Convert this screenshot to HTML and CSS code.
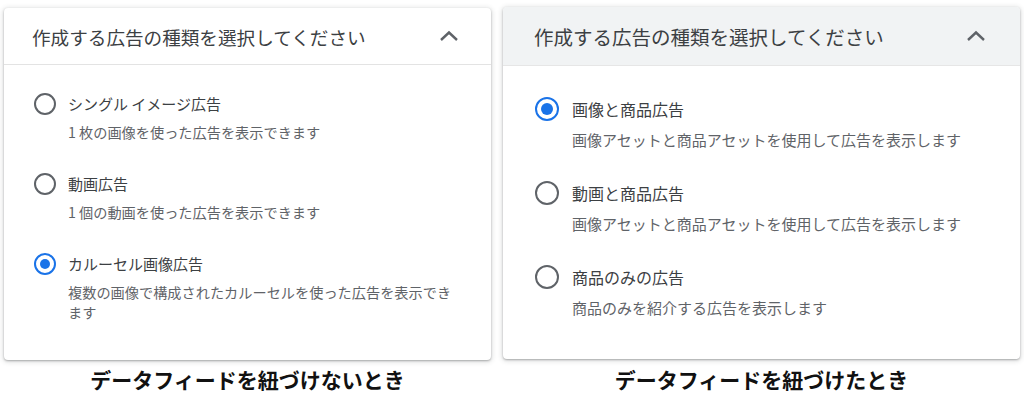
FILE: index.html
```html
<!DOCTYPE html>
<html lang="ja">
<head>
<meta charset="utf-8">
<link rel="stylesheet" href="styles.css">
</head>
<body>
<div class="page">
  <div class="col col-left">
    <div class="card">
      <div class="card-head">
        <span class="title">作成する広告の種類を選択してください</span>
        <svg class="chev" width="20" height="12" viewBox="0 0 20 12"><polyline points="2,10 10,2.5 18,10" fill="none" stroke="#5f6368" stroke-width="2.4"/></svg>
      </div>
      <div class="card-body">
        <div class="opt">
          <span class="radio"></span>
          <div class="texts">
            <div class="label">シングル イメージ広告</div>
            <div class="sub">1 枚の画像を使った広告を表示できます</div>
          </div>
        </div>
        <div class="opt">
          <span class="radio"></span>
          <div class="texts">
            <div class="label">動画広告</div>
            <div class="sub">1 個の動画を使った広告を表示できます</div>
          </div>
        </div>
        <div class="opt">
          <span class="radio on"></span>
          <div class="texts">
            <div class="label">カルーセル画像広告</div>
            <div class="sub">複数の画像で構成されたカルーセルを使った広告を表示できます</div>
          </div>
        </div>
      </div>
    </div>
    <div class="caption">データフィードを紐づけないとき</div>
  </div>
  <div class="col col-right">
    <div class="card">
      <div class="card-head">
        <span class="title">作成する広告の種類を選択してください</span>
        <svg class="chev" width="20" height="12" viewBox="0 0 20 12"><polyline points="2,10 10,2.5 18,10" fill="none" stroke="#5f6368" stroke-width="2.4"/></svg>
      </div>
      <div class="card-body">
        <div class="opt">
          <span class="radio on"></span>
          <div class="texts">
            <div class="label">画像と商品広告</div>
            <div class="sub">画像アセットと商品アセットを使用して広告を表示します</div>
          </div>
        </div>
        <div class="opt">
          <span class="radio"></span>
          <div class="texts">
            <div class="label">動画と商品広告</div>
            <div class="sub">画像アセットと商品アセットを使用して広告を表示します</div>
          </div>
        </div>
        <div class="opt">
          <span class="radio"></span>
          <div class="texts">
            <div class="label">商品のみの広告</div>
            <div class="sub">商品のみを紹介する広告を表示します</div>
          </div>
        </div>
      </div>
    </div>
    <div class="caption">データフィードを紐づけたとき</div>
  </div>
</div>
</body>
</html>
```
FILE: styles.css
```css
* { box-sizing: border-box; }
html, body { margin: 0; padding: 0; background: #fff; }
body {
  font-family: "Noto Sans CJK JP", "Noto Sans", Roboto, sans-serif;
  color: #3c4043;
  width: 1024px;
  height: 398px;
  overflow: hidden;
}
.page {
  display: flex;
  padding-left: 4px;
  gap: 12px;
}
.col { display: flex; flex-direction: column; }
.col-left { width: 487px; padding-top: 8px; }
.col-right { width: 517px; padding-top: 7px; }

.card {
  background: #fff;
  border-radius: 4px;
  box-shadow: 0 1px 2px rgba(60,64,67,.35), 0 1px 5px 1px rgba(60,64,67,.18);
  overflow: hidden;
}
.card-head {
  display: flex;
  align-items: center;
  justify-content: space-between;
}
.col-left .card-head {
  height: 57px;
  padding: 0 32px 0 28px;
  border-bottom: 1px solid #e3e3e3;
}
.col-right .card-head {
  height: 59px;
  padding: 0 34px 0 31px;
  background: #f1f3f4;
  border-bottom: 1px solid #e6e6e6;
}
.title { font-size: 18.6px; color: #3c4043; letter-spacing: 0; }
.col-right .title { font-size: 19.5px; }
.chev { display: block; }

.card-body { display: flex; flex-direction: column; }
.col-left .card-body { padding: 29px 30px 38px 30px; gap: 32px; }
.col-right .card-body { padding: 32px 30px 41px 32px; gap: 32px; }

.opt { display: flex; align-items: flex-start; }
.radio {
  flex: none;
  width: 22px;
  height: 22px;
  border-radius: 50%;
  border: 2.5px solid #5f6368;
  display: flex;
  align-items: center;
  justify-content: center;
}
.col-left .radio { margin-top: -1px; }
.col-right .radio { width: 24px; height: 24px; margin-top: -1px; }
.radio.on { border-color: #1a73e8; }
.radio.on::after {
  content: "";
  width: 10px;
  height: 10px;
  border-radius: 50%;
  background: #1a73e8;
}
.col-right .radio.on::after { width: 12px; height: 12px; }

.texts { display: flex; flex-direction: column; }
.col-left .texts { margin-left: 12px; gap: 8px; }
.col-right .texts { margin-left: 13px; gap: 10px; }
.label { color: #3c4043; }
.sub { color: #5f6368; }
.col-left .label { font-size: 15px; line-height: 20px; }
.col-left .sub { font-size: 14.2px; line-height: 20px; }
.col-right .label { font-size: 16px; line-height: 22px; }
.col-right .sub { font-size: 15px; line-height: 20px; }

.caption {
  text-align: center;
  font-weight: 700;
  font-size: 21px;
  line-height: 28px;
  color: #111;
  margin-top: 5px;
}
.col-right .caption { margin-top: 6px; }
```
